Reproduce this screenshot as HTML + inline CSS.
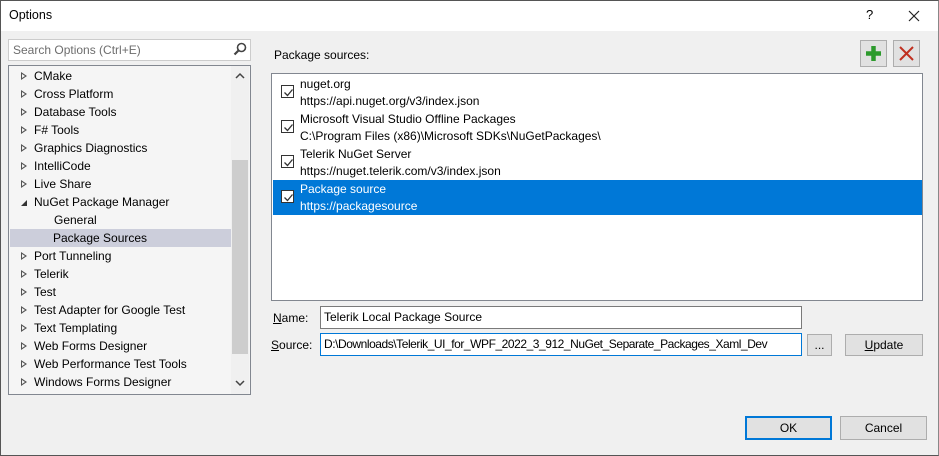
<!DOCTYPE html>
<html><head><style>
*{box-sizing:border-box;margin:0;padding:0}
body{width:939px;height:456px;background:#f0f0f0;font-family:"Liberation Sans",sans-serif;font-size:12px;color:#000;position:relative;overflow:hidden}
.a{position:absolute}
#title{left:0;top:0;width:939px;height:31px;background:#fff}
#frame{left:0;top:0;width:939px;height:456px;border:1px solid #555;border-right-color:#888;pointer-events:none}
.tree div{position:absolute;left:2px;height:18px;line-height:18px;width:220px;white-space:nowrap}
.tri{display:inline-block;width:0;height:0;border-left:6px solid #555;border-top:4px solid transparent;border-bottom:4px solid transparent;position:relative;margin-left:10px;margin-right:7px}
.tri::after{content:"";position:absolute;left:-5px;top:-2px;border-left:3px solid #f5f5f5;border-top:2px solid transparent;border-bottom:2px solid transparent}
.row{position:absolute;left:1px;width:649px;height:35px}
.row .cb{position:absolute;left:8px;top:10px;width:13px;height:13px;border:1px solid #333;background:#fff}
.row .cb svg{position:absolute;left:1px;top:1px}
.row .t1{position:absolute;left:27px;top:1px;line-height:16px}
.row .t2{position:absolute;left:27px;top:18px;line-height:16px}
.btn{position:absolute;background:#e1e1e1;border:1px solid #adadad;text-align:center;line-height:20px}
</style></head><body>
<div class="a" id="title"></div>
<div class="a" style="left:9px;top:8px;font-size:12.5px">Options</div>
<div class="a" style="left:866px;top:7px;font-size:13px">?</div>
<svg class="a" style="left:908px;top:10px" width="12" height="12"><path d="M1 1L11 11M11 1L1 11" stroke="#222" stroke-width="1.2"/></svg>

<div class="a" style="left:8px;top:39px;width:243px;height:22px;background:#fff;border:1px solid #ccc"></div>
<div class="a" style="left:13px;top:43px;color:#6d6d6d">Search Options (Ctrl+E)</div>
<svg class="a" style="left:233px;top:42px" width="14" height="14"><circle cx="8.5" cy="5.5" r="4" fill="none" stroke="#444" stroke-width="1.6"/><path d="M5.5 8.5L1.5 12.5" stroke="#444" stroke-width="2.2"/></svg>

<div class="a tree" style="left:8px;top:65px;width:243px;height:330px;background:#f5f5f5;border:1px solid #828790">
<div style="top:1px"><span class="tri"></span>CMake</div>
<div style="top:19px"><span class="tri"></span>Cross Platform</div>
<div style="top:37px"><span class="tri"></span>Database Tools</div>
<div style="top:55px"><span class="tri"></span>F# Tools</div>
<div style="top:73px"><span class="tri"></span>Graphics Diagnostics</div>
<div style="top:91px"><span class="tri"></span>IntelliCode</div>
<div style="top:109px"><span class="tri"></span>Live Share</div>
<div style="top:127px"><span style="display:inline-block;width:0;height:0;border-right:6px solid #333;border-top:6px solid transparent;margin-left:10px;margin-right:7px"></span>NuGet Package Manager</div>
<div style="top:145px;padding-left:43px">General</div>
<div style="top:163px;padding-left:43px;background:#cccedb;width:221px;left:1px">Package Sources</div>
<div style="top:181px"><span class="tri"></span>Port Tunneling</div>
<div style="top:199px"><span class="tri"></span>Telerik</div>
<div style="top:217px"><span class="tri"></span>Test</div>
<div style="top:235px"><span class="tri"></span>Test Adapter for Google Test</div>
<div style="top:253px"><span class="tri"></span>Text Templating</div>
<div style="top:271px"><span class="tri"></span>Web Forms Designer</div>
<div style="top:289px"><span class="tri"></span>Web Performance Test Tools</div>
<div style="top:307px"><span class="tri"></span>Windows Forms Designer</div>
<span class="a" style="left:222px;top:0;width:18px;height:328px;background:#f0f0f0"></span>
<span class="a" style="left:223px;top:94px;width:16px;height:194px;background:#cdcdcd"></span>
<svg class="a" style="left:226px;top:6px" width="10" height="8"><path d="M1 6L5 2L9 6" fill="none" stroke="#444" stroke-width="1.5"/></svg>
<svg class="a" style="left:226px;top:313px" width="10" height="8"><path d="M1 2L5 6L9 2" fill="none" stroke="#444" stroke-width="1.5"/></svg>
</div>

<div class="a" style="left:274px;top:48px">Package sources:</div>
<div class="btn" style="left:860px;top:40px;width:27px;height:27px"><svg width="25" height="25"><path d="M12.5 5V20M5 12.5H20" stroke="#2d9a2d" stroke-width="4.5"/></svg></div>
<div class="btn" style="left:893px;top:40px;width:27px;height:27px"><svg width="25" height="25"><path d="M6 6L19 19M19 6L6 19" stroke="#c03020" stroke-width="2"/></svg></div>

<div class="a" style="left:271px;top:73px;width:652px;height:228px;background:#fff;border:1px solid #828790">
<div class="row" style="top:1px"><span class="cb"><svg width="11" height="11"><path d="M1.5 5.5L4.5 8.5L9.5 2.5" fill="none" stroke="#333" stroke-width="1.3"/></svg></span><span class="t1">nuget.org</span><span class="t2">https://api.nuget.org/v3/index.json</span></div>
<div class="row" style="top:36px"><span class="cb"><svg width="11" height="11"><path d="M1.5 5.5L4.5 8.5L9.5 2.5" fill="none" stroke="#333" stroke-width="1.3"/></svg></span><span class="t1">Microsoft Visual Studio Offline Packages</span><span class="t2">C:\Program Files (x86)\Microsoft SDKs\NuGetPackages\</span></div>
<div class="row" style="top:71px"><span class="cb"><svg width="11" height="11"><path d="M1.5 5.5L4.5 8.5L9.5 2.5" fill="none" stroke="#333" stroke-width="1.3"/></svg></span><span class="t1">Telerik NuGet Server</span><span class="t2">https://nuget.telerik.com/v3/index.json</span></div>
<div class="row" style="top:106px;background:#0078d7;color:#fff"><span class="cb"><svg width="11" height="11"><path d="M1.5 5.5L4.5 8.5L9.5 2.5" fill="none" stroke="#333" stroke-width="1.3"/></svg></span><span class="t1">Package source</span><span class="t2">https://packagesource</span></div>
</div>

<div class="a" style="left:273px;top:311px"><u>N</u>ame:</div>
<div class="a" style="left:320px;top:306px;width:482px;height:23px;background:#fff;border:1px solid #7a7a7a;padding:3px 3px">Telerik Local Package Source</div>
<div class="a" style="left:271px;top:338px"><u>S</u>ource:</div>
<div class="a" style="left:320px;top:333px;width:482px;height:23px;background:#fff;border:1px solid #0078d7;padding:3px 3px;white-space:nowrap;overflow:hidden;letter-spacing:-0.45px">D:\Downloads\Telerik_UI_for_WPF_2022_3_912_NuGet_Separate_Packages_Xaml_Dev</div>
<div class="btn" style="left:807px;top:334px;width:25px;height:22px">...</div>
<div class="btn" style="left:845px;top:334px;width:78px;height:22px"><u>U</u>pdate</div>

<div class="btn" style="left:745px;top:416px;width:87px;height:24px;border:2px solid #0078d7;line-height:20px">OK</div>
<div class="btn" style="left:840px;top:416px;width:87px;height:24px;line-height:22px">Cancel</div>
<div class="a" id="frame"></div>
</body></html>
